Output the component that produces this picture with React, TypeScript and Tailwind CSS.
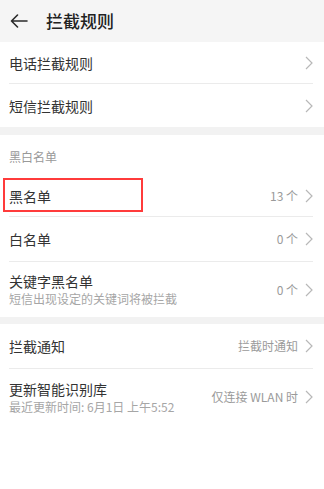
import React from "react";

const font = { fontFamily: '"Noto Sans CJK SC", "Noto Sans", sans-serif' };

function Chevron() {
  return (
    <svg width="8" height="14" viewBox="0 0 8 14" className="shrink-0">
      <path d="M1 1 L7 7 L1 13" fill="none" stroke="#b8b8b8" strokeWidth="1.2" strokeLinejoin="miter" />
    </svg>
  );
}

function Row({
  title,
  sub,
  value,
  h,
  last,
  highlight,
}: {
  title: string;
  sub?: string;
  value?: string;
  h: string;
  last?: boolean;
  highlight?: boolean;
}) {
  return (
    <div className="relative pl-[9px] pr-[11px]">
      <div className={`flex items-center justify-between ${h} ${last ? "" : "border-b border-[#ebebeb]"}`}>
        <div className="flex flex-col">
          <span className="text-[14px] leading-[18px] text-[#333333]">{title}</span>
          {sub && <span className="text-[12px] leading-[17px] text-[#a6a6a6]">{sub}</span>}
        </div>
        <div className="flex items-center gap-[7px]">
          {value && <span className="text-[12px] text-[#9a9a9a]">{value}</span>}
          <Chevron />
        </div>
      </div>
      {highlight && (
        <div className="absolute left-[3px] top-[3px] w-[140px] h-[34px] border-2 border-[#ff3b3b]" />
      )}
    </div>
  );
}

export default function App() {
  return (
    <div className="w-[324px] h-[489px] bg-white flex flex-col" style={font}>
      <div className="h-[42px] bg-[#f5f5f5] flex items-center">
        <svg width="18" height="14" viewBox="0 0 18 14" className="ml-[10px]">
          <path d="M17 7 H1.5 M7.5 1 L1.5 7 L7.5 13" fill="none" stroke="#2a2a2a" strokeWidth="1.6" strokeLinecap="round" strokeLinejoin="round" />
        </svg>
        <span className="ml-[18px] text-[17px] text-[#222222] font-medium">拦截规则</span>
      </div>
      <div className="bg-white">
        <Row title="电话拦截规则" h="h-[42px]" />
        <Row title="短信拦截规则" h="h-[43px]" last />
      </div>
      <div className="h-[8px] bg-[#f2f2f2]" />
      <div className="bg-white">
        <div className="h-[40px] pl-[9px] flex items-center pt-[4px]">
          <span className="text-[12px] text-[#999999]">黑白名单</span>
        </div>
        <Row title="黑名单" value="13 个" h="h-[42px]" highlight />
        <Row title="白名单" value="0 个" h="h-[45px]" />
        <Row title="关键字黑名单" sub="短信出现设定的关键词将被拦截" value="0 个" h="h-[55px]" last />
      </div>
      <div className="h-[7px] bg-[#f2f2f2]" />
      <div className="bg-white">
        <Row title="拦截通知" value="拦截时通知" h="h-[45px]" />
        <Row title="更新智能识别库" sub="最近更新时间: 6月1日 上午5:52" value="仅连接 WLAN 时" h="h-[56px]" last />
      </div>
    </div>
  );
}
